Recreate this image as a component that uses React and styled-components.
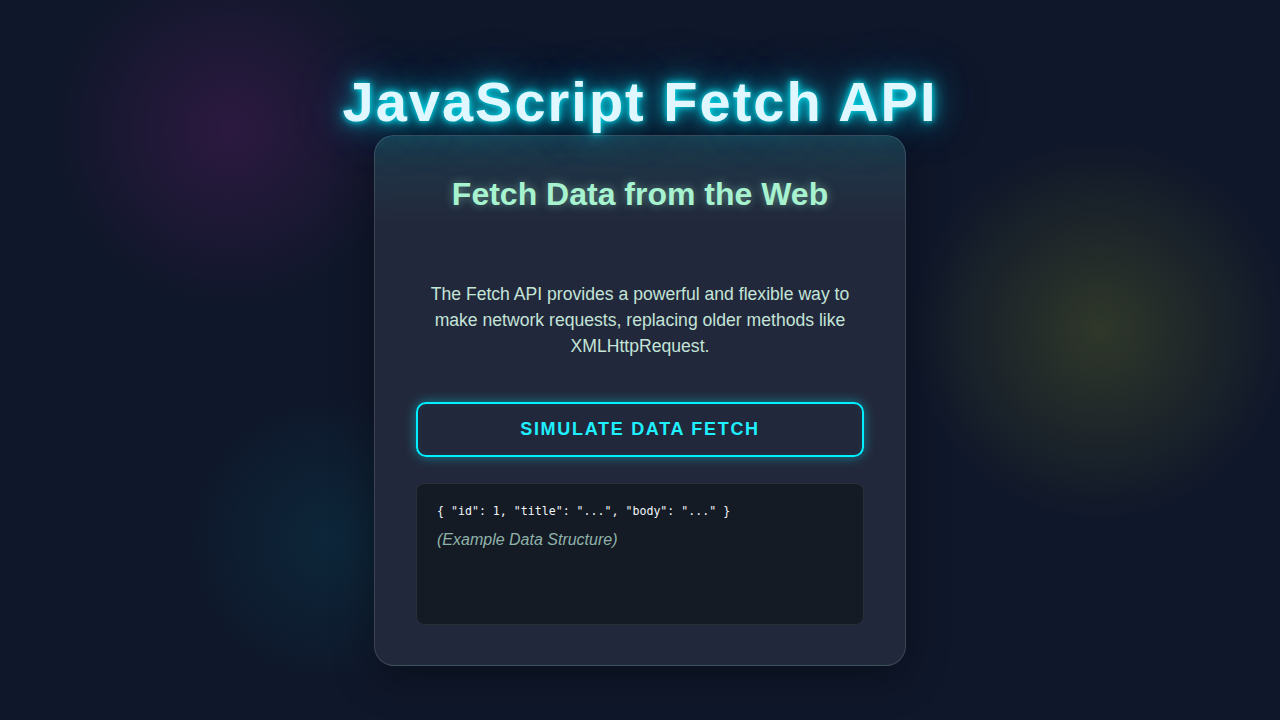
import React from 'react'
import styled, { createGlobalStyle } from 'styled-components'

const GlobalStyle = createGlobalStyle`
    html, body {
        margin: 0;
        padding: 0;
        height: 100%;
    }

    body {
        background: #0f172a;
        font-family: "Liberation Sans", Arial, sans-serif;
        color: #e0f2f1;
        overflow: hidden;
    }
`

const Page = styled.div`
    position: relative;
    width: 1280px;
    height: 720px;
    display: flex;
    flex-direction: column;
    align-items: center;
    box-sizing: border-box;
    padding-top: 70px;
    background:
        radial-gradient(circle at 230px 130px, rgba(120, 30, 120, 0.28) 0, rgba(120, 30, 120, 0) 180px),
        radial-gradient(circle at 330px 540px, rgba(0, 120, 140, 0.16) 0, rgba(0, 120, 140, 0) 150px),
        radial-gradient(circle at 1100px 330px, rgba(130, 140, 40, 0.28) 0, rgba(130, 140, 40, 0) 190px),
        #0f172a;
`

const Title = styled.h1`
    margin: 0;
    font-size: 56px;
    line-height: 64px;
    font-weight: 700;
    letter-spacing: 2px;
    color: #e0f7ff;
    text-shadow:
        0 0 6px rgba(0, 240, 255, 0.95),
        0 0 16px rgba(0, 235, 255, 0.8),
        0 0 32px rgba(0, 220, 255, 0.55),
        0 0 60px rgba(0, 200, 255, 0.35);
    position: relative;
    z-index: 2;
`

const Card = styled.div`
    width: 532px;
    box-sizing: border-box;
    padding: 40px 41px;
    margin-top: 1px;
    border-radius: 20px;
    border: 1px solid rgba(255, 255, 255, 0.13);
    background: linear-gradient(180deg, rgba(30, 62, 78, 0.9) 0, rgba(36, 41, 60, 0.95) 90px, rgba(36, 41, 60, 0.95) 100%);
    box-shadow: 0 10px 40px rgba(0, 0, 0, 0.35);
    display: flex;
    flex-direction: column;
    align-items: stretch;
    text-align: center;
`

const Subtitle = styled.h2`
    margin: 0 0 69px;
    font-size: 32px;
    line-height: 36px;
    font-weight: 700;
    color: #a7f3d0;
    text-shadow: 0 0 10px rgba(167, 243, 208, 0.45);
`

const Text = styled.p`
    margin: 0 0 43px;
    font-size: 17.6px;
    line-height: 26px;
    color: #c4e4d8;
`

const FetchButton = styled.button`
    height: 55px;
    border: 2px solid #00f0ff;
    border-radius: 10px;
    background: transparent;
    color: #1ff0ff;
    font-family: "Liberation Sans", Arial, sans-serif;
    font-size: 18px;
    font-weight: 700;
    letter-spacing: 1.7px;
    text-transform: uppercase;
    box-shadow: 0 0 12px rgba(0, 240, 255, 0.45), inset 0 0 6px rgba(0, 240, 255, 0.08);
    cursor: pointer;
`

const Output = styled.div`
    margin-top: 26px;
    height: 142px;
    box-sizing: border-box;
    padding: 18px 20px;
    border-radius: 8px;
    border: 1px solid rgba(255, 255, 255, 0.09);
    background: rgba(20, 25, 35, 0.9);
    text-align: left;
`

const Code = styled.pre`
    margin: 0 0 9px;
    font-family: "DejaVu Sans Mono", "Liberation Mono", monospace;
    font-size: 11.6px;
    line-height: 18px;
    color: #f1f5f9;
`

const Note = styled.p`
    margin: 0;
    font-size: 16px;
    line-height: 22px;
    font-style: italic;
    color: #8fb3aa;
`

export default function App() {
    return (<>
        <GlobalStyle />
        <Page>
            <Title>JavaScript Fetch API</Title>
            <Card>
                <Subtitle>Fetch Data from the Web</Subtitle>
                <Text>
                    The Fetch API provides a powerful and flexible way to make network requests, replacing older methods like XMLHttpRequest.
                </Text>
                <FetchButton>Simulate Data Fetch</FetchButton>
                <Output>
                    <Code>{'{ "id": 1, "title": "...", "body": "..." }'}</Code>
                    <Note>(Example Data Structure)</Note>
                </Output>
            </Card>
        </Page>
    </>)
}
